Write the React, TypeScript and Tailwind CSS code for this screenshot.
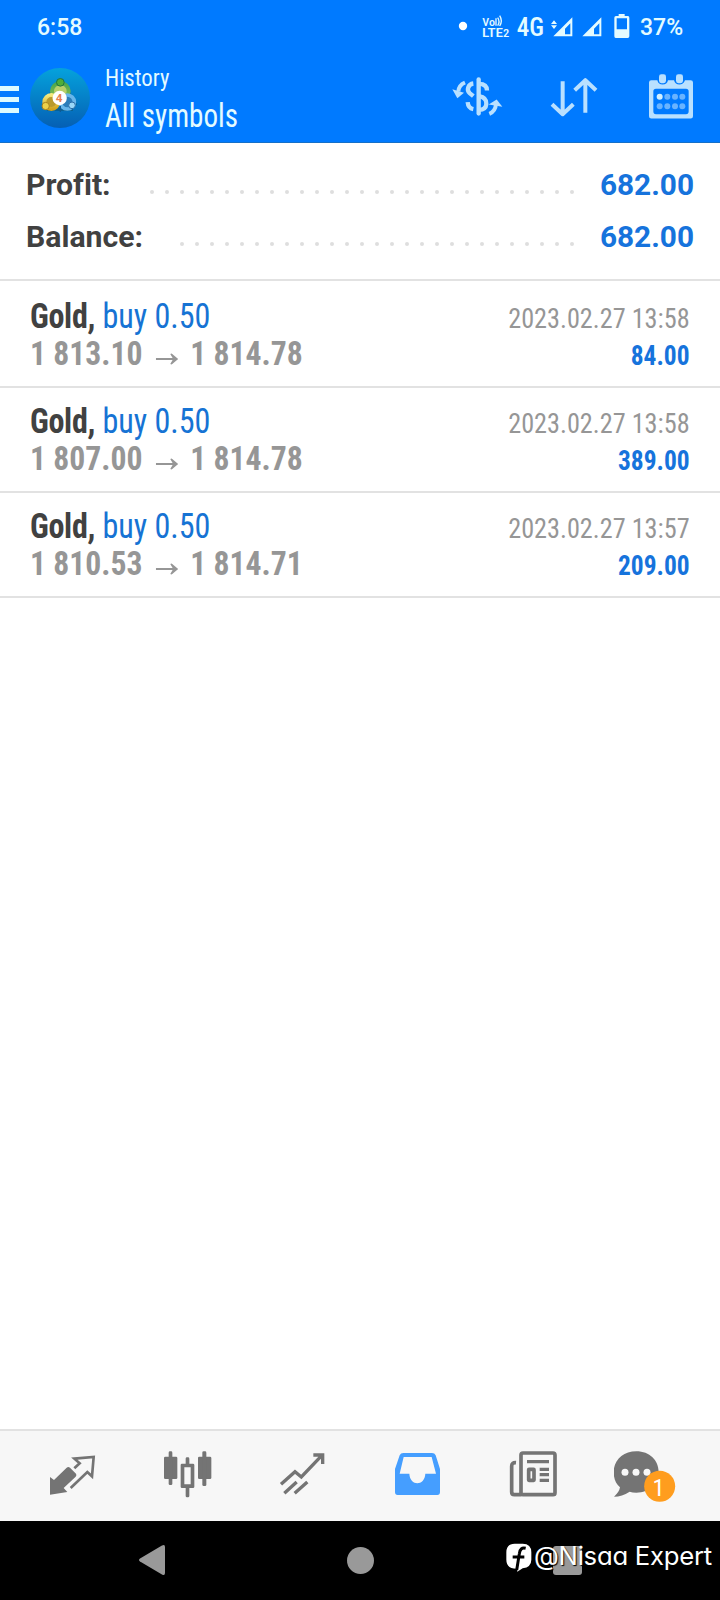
import React from 'react';

const deals = [
  { open: '1 813.10', close: '1 814.78', time: '2023.02.27 13:58', profit: '84.00' },
  { open: '1 807.00', close: '1 814.78', time: '2023.02.27 13:58', profit: '389.00' },
  { open: '1 810.53', close: '1 814.71', time: '2023.02.27 13:57', profit: '209.00' },
];

function StatusBar() {
  return (
    <div className="flex h-[54px] items-center justify-between pl-[37px] pr-[37px] text-[23px] font-medium text-[#e4fbff]">
      <span className="pt-px leading-none">6:58</span>
      <div className="flex items-center">
        <svg className="mb-[2px] h-[28px] w-[176px] overflow-visible" viewBox="54 36 528 84" fill="#e4fbff">
          <circle cx="69" cy="78" r="12.5" fill="#fff" />
          <g fontFamily="'Roboto Condensed', Roboto, sans-serif" fontWeight="500">
            <text x="127" y="77" fontSize="31" textLength="38" lengthAdjust="spacingAndGlyphs">Vo</text>
            <text x="126" y="112" fontSize="38" textLength="82" lengthAdjust="spacingAndGlyphs">LTE<tspan fontSize="31">2</tspan></text>
            <text x="230" y="109" fontSize="80" textLength="82" lengthAdjust="spacingAndGlyphs">4G</text>
          </g>
          <path d="M168 55V77M173 53q8 12 0 24M179 47q10 16 0 31" fill="none" stroke="#e4fbff" strokeWidth="4" />
          <path d="M333 72l9-11 9 11zM333 76l9 11 9-11z" />
          <path fillRule="evenodd" d="M397 52V109H340zM391 70L375 86V103H391z" />
          <path fillRule="evenodd" d="M484 52V109H427zM478 70L462 86V103H478z" />
          <path fillRule="evenodd" d="M536 42H554V48H564Q568 48 568 53V109Q568 114 563 114H527Q523 114 523 109V53Q523 48 528 48H536zM530 55V88H561V55z" />
        </svg>
        <span className="ml-[6px] w-[43px] whitespace-nowrap pt-px leading-none">37%</span>
      </div>
    </div>
  );
}

function Logo() {
  return (
    <svg className="h-[60px] w-[60px]" viewBox="91 204 180 180">
      <defs>
        <linearGradient id="disc" x1="0" y1="0" x2="0" y2="1">
          <stop offset="0" stopColor="#05a2dc" />
          <stop offset="1" stopColor="#055fb4" />
        </linearGradient>
        <linearGradient id="gold" x1="0" y1="0" x2="0" y2="1">
          <stop offset="0" stopColor="#f6ea7e" />
          <stop offset="1" stopColor="#d0a21c" />
        </linearGradient>
        <linearGradient id="leaf" x1="0" y1="0" x2="0" y2="1">
          <stop offset="0" stopColor="#4da64a" />
          <stop offset="1" stopColor="#8cc257" />
        </linearGradient>
      </defs>
      <circle cx="181" cy="294" r="90" fill="url(#disc)" />
      <path d="M158 274L134 316M204 274L228 316M142 328H220" stroke="#0f5370" strokeWidth="10" opacity=".55" />
      <circle cx="182" cy="274" r="25" fill="#b8cf6a" stroke="url(#leaf)" strokeWidth="12" />
      <circle cx="155" cy="306" r="21" fill="#b99a2c" stroke="url(#gold)" strokeWidth="12" />
      <circle cx="203" cy="306" r="21" fill="#2b7dba" stroke="#68b6ea" strokeWidth="11" />
      <path d="M182 318V336" stroke="#0f5a94" strokeWidth="4" />
      <circle cx="182" cy="247" r="11.500" fill="#4fae3a" stroke="#1f7442" strokeWidth="3" />
      <circle cx="138" cy="318" r="11" fill="#ecd04a" stroke="#a8821c" strokeWidth="3" />
      <circle cx="217" cy="316" r="10" fill="#9ad8f8" stroke="#2a6da8" strokeWidth="3" />
      <circle cx="180" cy="294" r="21.500" fill="#fff" />
      <text x="178" y="306" fontSize="35" fontWeight="700" fontFamily="Roboto, sans-serif" textAnchor="middle" fill="#e8814f">4</text>
    </svg>
  );
}

function Header() {
  return (
    <header className="h-[143px] border-b border-[#1670c8] bg-[#007aff]">
      <StatusBar />
      <div className="flex h-[88px] items-center justify-between pr-[25px]">
        <div className="flex items-center">
          <div className="flex w-[19px] flex-col gap-[6px] pt-[2px]">
            <i className="h-[5px] bg-[#dcfaff]" />
            <i className="h-[5px] bg-[#dcfaff]" />
            <i className="h-[5px] bg-[#dcfaff]" />
          </div>
          <div className="ml-[11px]">
            <Logo />
          </div>
          <div className="ml-[15px] w-[160px] pb-[2px] font-['Roboto_Condensed',Roboto,sans-serif] text-[#e4fbff]">
            <div className="origin-left scale-x-[0.95] whitespace-nowrap text-[24px] font-[450] leading-[38px]">History</div>
            <div className="origin-left scale-x-[0.895] whitespace-nowrap text-[32.5px] font-[450] leading-[38px]">All symbols</div>
          </div>
        </div>
        <div className="flex items-center">
          <svg className="h-[48px] w-[55px]" viewBox="30 223.5 165 144" fill="none" stroke="#b9e0ff" strokeWidth="12">
            <path d="M116 240V342" strokeWidth="13" strokeLinecap="round" />
            <path d="M141 273C141 260 132 253 117 253M117 290C134 293 140 303 139 314C138 326 130 331 117 331" strokeWidth="13" />
            <path d="M100 252C84 254 79 272 89 281L100 290M100 329C90 327 84 321 83 308" strokeWidth="13" />
            <path d="M75 249Q56 257 55 276" />
            <path d="M37 269L72 280 52 296z" fill="#b9e0ff" stroke="none" />
            <path d="M148 343Q166 336 168 314" />
            <path d="M146 315L170 300 187 322z" fill="#b9e0ff" stroke="none" />
          </svg>
          <svg className="ml-[43px] h-[48px] w-[52px]" viewBox="324 223.5 156 144" fill="none" stroke="#b9e0ff" strokeWidth="12">
            <path d="M368 245V344M336 314L368 344 400 314M436 340V242M404 272L436 242 468 272" strokeLinejoin="round" />
          </svg>
          <svg className="ml-[47px] h-[48px] w-[48px]" viewBox="621 223.5 144 144">
            <path fill="#b9e0ff" fillRule="evenodd" d="M634 242H652Q655 255 668 255T684 242H702Q706 255 718 255T735 242H752Q759 242 759 249V350Q759 357 752 357H634Q627 357 627 350V249Q627 242 634 242zM648 268Q640 268 640 276V335Q640 344 648 344H738Q746 344 746 335V276Q746 268 738 268z" />
            <rect x="657" y="224" width="21" height="27" rx="7" fill="#b9e0ff" />
            <rect x="708" y="224" width="21" height="27" rx="7" fill="#b9e0ff" />
            <g fill="#69b3ff">
              <circle cx="659" cy="292" r="9" fill="#d2efff" />
              <circle cx="682" cy="292" r="9" />
              <circle cx="705" cy="292" r="9" />
              <circle cx="727" cy="292" r="9" />
              <circle cx="659" cy="320" r="9" />
              <circle cx="682" cy="320" r="9" />
              <circle cx="705" cy="320" r="9" />
              <circle cx="727" cy="320" r="9" />
            </g>
          </svg>
        </div>
      </div>
    </header>
  );
}

function SummaryRow({ label, value, dots }: { label: string; value: string; dots: number }) {
  return (
    <div className="flex h-[52px] items-center pl-[26px] pr-[26px] text-[29.8px] font-bold leading-none">
      <span className="text-[30.2px] text-[#414141] [font-variant-ligatures:none]">{label}</span>
      <div className="mr-[26px] flex flex-1 justify-end gap-[11px] pt-[13px]">
        {Array.from({ length: dots }, (_, i) => (
          <i key={i} className="h-[4px] w-[4px] rounded-full bg-[#dedede]" />
        ))}
      </div>
      <span className="text-[#1673dc]">{value}</span>
    </div>
  );
}

function DealRow({ open, close, time, profit }: (typeof deals)[number]) {
  return (
    <div className="flex h-[105px] justify-between whitespace-nowrap border-b-2 border-[#e2e2e2] px-[30px] pt-[15px] font-['Roboto_Condensed',Roboto,sans-serif] leading-[37px]">
      <div>
        <div className="origin-left scale-x-[0.917] text-[35px]">
          <b className="tracking-[-0.01em] text-[#414141]">Gold,</b> <span className="text-[#1673d4]">buy 0.50</span>
        </div>
        <div className="flex origin-left scale-x-[0.932] items-center text-[34px] font-bold text-[#969696]">
          <span>{open}</span>
          <svg className="ml-[14px] mr-[13px] mt-[11px] h-[12px] w-[24px]" viewBox="0 0 24 12">
            <path d="M0 5.100H18L15.500 1 17 .5 24 6 17 11.500 15.500 11 18 6.900H0z" fill="#969696" />
          </svg>
          <span>{close}</span>
        </div>
      </div>
      <div className="pt-[2px] text-right">
        <div className="origin-right scale-x-[0.937] text-[28px] text-[#969696]">{time}</div>
        <div className="origin-right scale-x-[0.925] text-[27.5px] font-bold text-[#1673dc]">{profit}</div>
      </div>
    </div>
  );
}

function TabBar() {
  const icon = 'h-[56px] w-[49px]';
  return (
    <nav className="grid h-[92px] grid-cols-6 items-center justify-items-center border-t-2 border-[#e2e2e2] bg-[#f7f7f7] px-[15px]">
      <svg className={icon} viewBox="54 84 147 168">
        <path fill="#747474" d="M110 143Q115 139 120 143L138 161Q141 166 137 170L101 204 112 216 60 224V171L72 180z" />
        <path fill="none" stroke="#747474" strokeWidth="8" d="M133 145L149 130 133 116 191 111 186 169 172 156 122 204" />
      </svg>
      <svg className={icon} viewBox="399 84 147 168" fill="#747474">
        <rect x="402" y="110" width="40" height="67" rx="4" />
        <rect x="416" y="94" width="11" height="101" rx="4" />
        <rect x="504" y="110" width="40" height="67" rx="4" />
        <rect x="517" y="94" width="12" height="104" rx="4" />
        <rect x="467" y="112" width="11" height="26" rx="4" />
        <rect x="467" y="200" width="11" height="32" rx="4" />
        <path fillRule="evenodd" d="M456 131H489Q493 131 493 135V200Q493 204 489 204H456Q452 204 452 200V135Q452 131 456 131zM463 142V193H482V142z" />
      </svg>
      <svg className={icon} viewBox="744 84 147 168" fill="none" stroke="#747474" strokeWidth="10">
        <path d="M753 193L795 155 814 171 875 107M850 105H878V132M763 220L800 186M794 220L832 186" />
      </svg>
      <svg className={icon} viewBox="99 84 147 168">
        <path fill="#459eff" fillRule="evenodd" d="M130 99H216Q224 99 227 106L240 147V216Q240 225 232 225H113Q105 225 105 216V147L119 106Q122 99 130 99zM131 111L119 161H148C150 199 194 199 196 161H228L215 111z" />
      </svg>
      <svg className={icon} viewBox="444 84 147 168" fill="none" stroke="#747474" strokeWidth="11">
        <rect x="483" y="99" width="102" height="125" rx="6" />
        <path d="M468 128Q455 127 455 139V216Q455 224 463 224H484" />
        <path d="M501 125H567M539 148H567M539 164H567M539 181H567" strokeWidth="10" />
        <rect x="506" y="148" width="16" height="33" rx="1" />
      </svg>
      <svg className="h-[56px] w-[67px]" viewBox="762 84 201 168">
        <path fill="#747474" d="M829 94C869 94 896 121 896 156S869 218 829 218Q817 218 809 215Q786 230 762 230Q778 216 780 202C767 191 761 175 761 156C761 121 789 94 829 94z" />
        <g fill="#f7f7f7">
          <circle cx="795" cy="157" r="10.500" />
          <circle cx="828" cy="157" r="10.500" />
          <circle cx="861" cy="157" r="10.500" />
        </g>
        <circle cx="899" cy="199" r="46.500" fill="#ff9d1e" />
        <text x="896" y="229" fontSize="74" fontFamily="'Roboto Condensed', Roboto, sans-serif" textAnchor="middle" fill="#fff">1</text>
      </svg>
    </nav>
  );
}

function SystemBar() {
  return (
    <div className="relative flex h-[79px] items-center bg-black pb-px">
      <svg className="ml-[138px] h-[32px] w-[28px]" viewBox="0 0 28 32">
        <path d="M2 14.500L24 1.500Q27 0 27 3V29Q27 32 24 30.500L2 17.500Q0 16 2 14.500z" fill="#999" />
      </svg>
      <i className="ml-[181px] h-[27px] w-[27px] rounded-full bg-[#999]" />
      <i className="ml-[179px] h-[29px] w-[29px] rounded-[3px] bg-[#999]" />
      <div className="absolute right-[8px] top-[20px] flex items-center gap-[2px]">
        <svg className="mt-[2px] h-[29px] w-[26px]" viewBox="436 370 78 87">
          <path fill="#fff" d="M462 372H486Q512 372 512 398V420Q512 442 486 446L470 456 468 447Q437 447 437 420V398Q437 372 462 372z" />
          <path fill="none" stroke="#000" strokeWidth="9" d="M495 386Q478 382 476 402L468 452M456 412H491" />
        </svg>
        <span className="w-[178px] whitespace-nowrap pb-px font-['Inter',sans-serif] text-[25.7px] leading-[30px] tracking-[-0.01em] text-white [font-feature-settings:'cv11'] [text-shadow:1px_1px_1px_#000]">
          @Nisaa Expert
        </span>
      </div>
    </div>
  );
}

export default function App() {
  return (
    <div className="flex h-[1600px] w-[720px] flex-col overflow-hidden bg-white font-['Roboto',sans-serif]">
      <Header />
      <section className="h-[138px] border-b-2 border-[#e2e2e2] pt-[16px]">
        <SummaryRow label="Profit:" value="682.00" dots={29} />
        <SummaryRow label="Balance:" value="682.00" dots={27} />
      </section>
      <main className="flex-1 pt-[2px]">
        {deals.map((deal) => (
          <DealRow key={deal.open} {...deal} />
        ))}
      </main>
      <TabBar />
      <SystemBar />
    </div>
  );
}
